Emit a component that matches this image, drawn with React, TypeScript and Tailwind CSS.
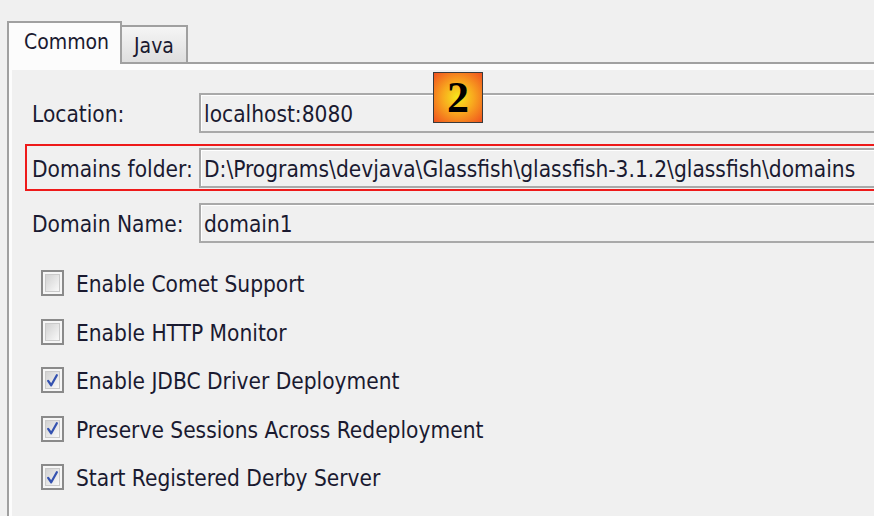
import React from "react";

const font = { fontFamily: '"DejaVu Sans Condensed", "DejaVu Sans", Tahoma, sans-serif' };

function Field({ value }: { value: string }) {
  return (
    <div className="flex-1 -mr-[20px] h-[40px] border-2 border-[#a9a9a9] bg-[#f0f0f0] shadow-[inset_1px_1px_0_#ffffff] flex items-center pl-[3px] pt-[3px] overflow-hidden whitespace-nowrap">
      <span>{value}</span>
    </div>
  );
}

function Row({ label, value, red }: { label: string; value: string; red?: boolean }) {
  return (
    <div
      className={`flex items-center h-[47px] pt-[2px] pb-[1px] pl-[5px] border-2 border-r-0 ${
        red ? "border-[#ee1a1a]" : "border-transparent"
      }`}
    >
      <div className="w-[167px] shrink-0 pt-[3px]">{label}</div>
      <Field value={value} />
    </div>
  );
}

function Check({ checked, label }: { checked?: boolean; label: string }) {
  return (
    <div className="h-[48.5px] flex items-center">
      <div className="ml-[16px] w-[23px] h-[26px] border-2 border-[#8a8a8a] bg-[#f6f6f6] p-[2px] shrink-0">
        <div className="w-full h-full border border-[#cacaca] bg-gradient-to-br from-[#d2d2d2] to-[#f9f9f9] flex items-center justify-center">
          {checked && (
            <svg width="15" height="17" viewBox="0 0 15 17">
              <path d="M2.5 9 L6 14 L12.5 2.5" fill="none" stroke="#3452b0" strokeWidth="2.6" strokeLinecap="round" strokeLinejoin="round" />
            </svg>
          )}
        </div>
      </div>
      <span className="ml-[12px] pt-[2px]">{label}</span>
    </div>
  );
}

export default function App() {
  return (
    <div
      className="relative w-[874px] h-[516px] overflow-hidden bg-[#f0f0f0] pt-[21px] pl-[7px] text-[22.5px] leading-none text-[#1a1a30] flex flex-col"
      style={font}
    >
      <div className="flex items-end h-[41px]">
        <div className="relative z-10 w-[115px] h-[43px] -mb-[2px] border-2 border-b-0 border-[#a0a0a0] bg-[#fcfcfc] pl-[15px] pt-[9px] text-[21px]">
          Common
        </div>
        <div className="w-[66px] h-[37px] border-2 border-l-0 border-b-0 border-[#a0a0a0] bg-gradient-to-b from-[#f5f5f5] to-[#dedede] pl-[12px] pt-[9px] text-[21px]">
          Java
        </div>
      </div>
      <div className="flex-1 flex flex-col border-t-2 border-l-2 border-[#a0a0a0] bg-[#fcfcfc] pt-[6px] pl-[3px]">
        <div className="flex-1 bg-[#f0f0f0] pl-[13px] pt-[19px]">
          <div className="flex flex-col gap-[8px]">
            <Row label="Location:" value="localhost:8080" />
            <Row label="Domains folder:" value="D:\Programs\devjava\Glassfish\glassfish-3.1.2\glassfish\domains" red />
            <Row label="Domain Name:" value="domain1" />
          </div>
          <div className="mt-[13px] flex flex-col">
            <Check label="Enable Comet Support" />
            <Check label="Enable HTTP Monitor" />
            <Check checked label="Enable JDBC Driver Deployment" />
            <Check checked label="Preserve Sessions Across Redeployment" />
            <Check checked label="Start Registered Derby Server" />
          </div>
        </div>
      </div>
      <div className="absolute left-[433px] top-[72px] w-[50px] h-[51px] border border-[#3a3a3a] bg-[radial-gradient(circle,#f5ea1c_0%,#f8a81e_45%,#f0501f_100%)] flex items-center justify-center">
        <span className="text-[44px] font-bold text-black" style={{ fontFamily: '"Liberation Serif", serif' }}>
          2
        </span>
      </div>
    </div>
  );
}
